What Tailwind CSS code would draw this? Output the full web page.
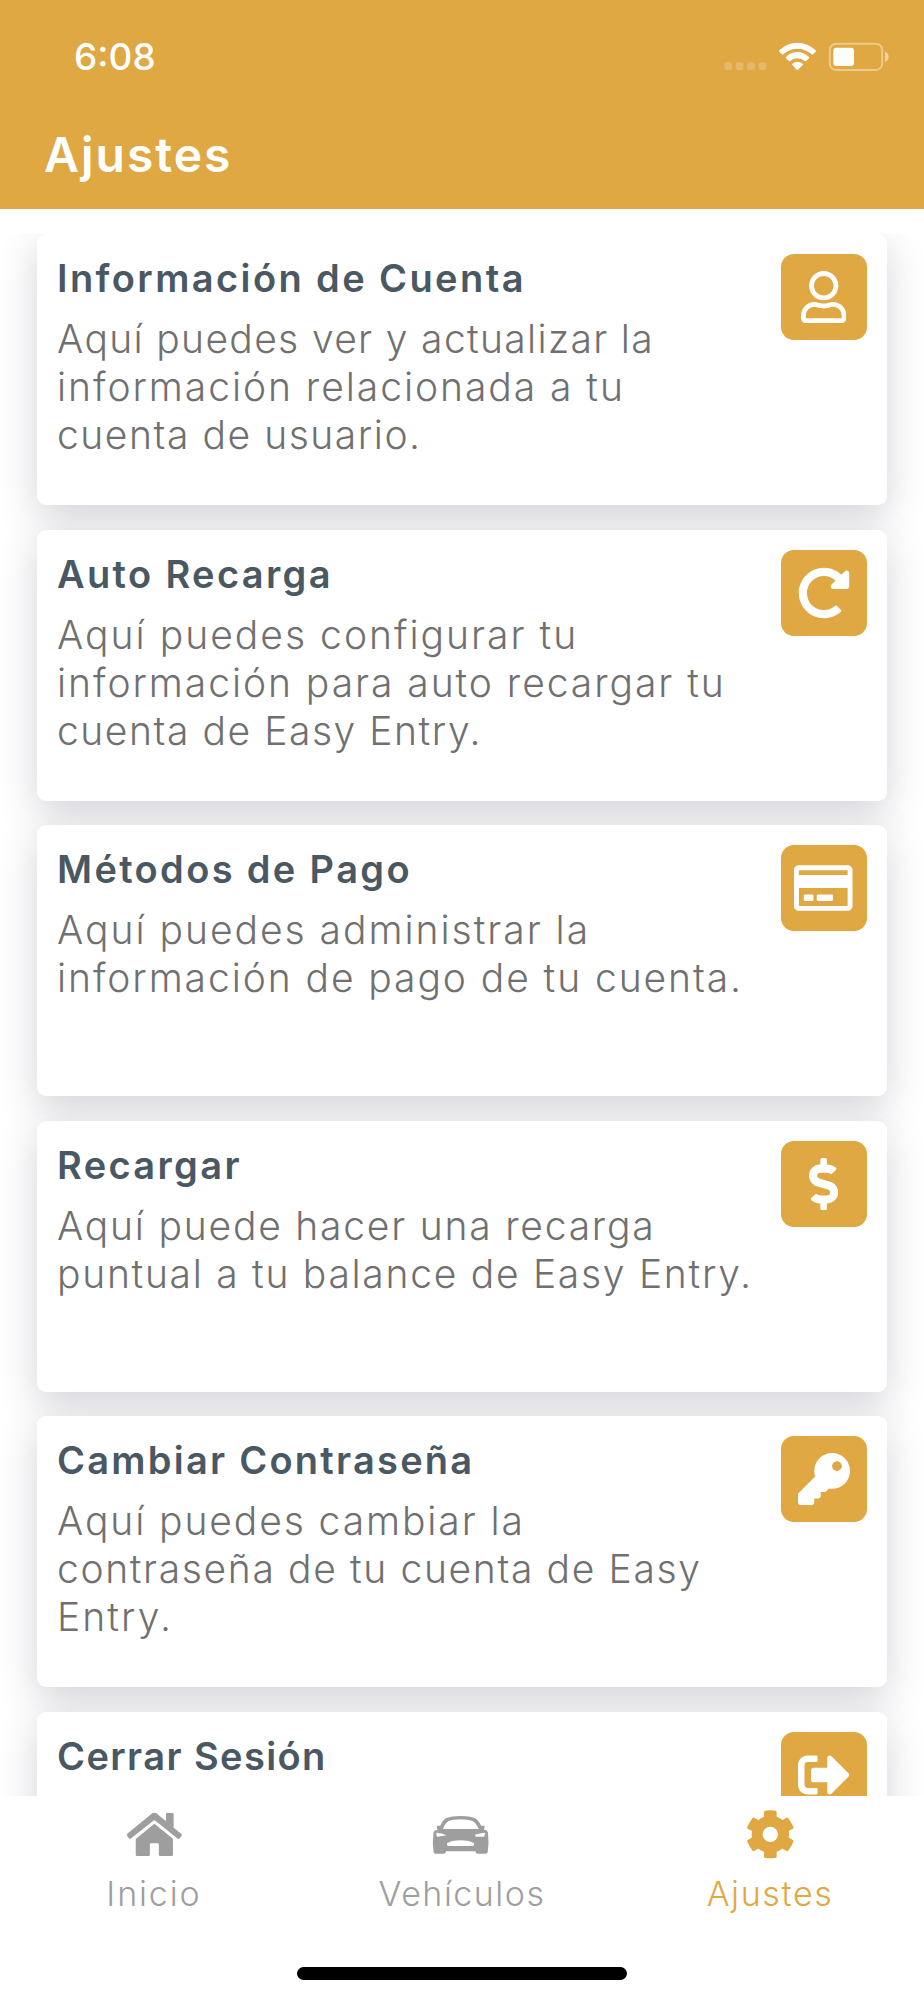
<!DOCTYPE html>
<html lang="es">
<head>
    <meta charset="UTF-8">
    <meta name="viewport" content="width=device-width, initial-scale=1.0">
    <title>Ajustes</title>
    <script src="https://cdn.jsdelivr.net/npm/@tailwindcss/browser@4"></script>
</head>
<body class="bg-white font-['Inter',sans-serif]">
    <div class="flex flex-col w-[924px] h-[2000px] overflow-hidden">

        <header class="bg-[#dfa842] h-[209px] shrink-0 text-white">
            <!-- Status bar -->
            <div class="flex items-start justify-between pt-[34px] pl-[74px] pr-[34px] h-[125px]">
                <span class="text-[37px] leading-[46px] font-medium">6:08</span>
                <svg class="w-[170px] h-[32px] mt-[6px]" viewBox="180 120 510 96" fill="#fff">
                    <g opacity=".2">
                        <rect x="193" y="187" width="23" height="23" rx="6"/>
                        <rect x="227" y="187" width="23" height="23" rx="6"/>
                        <rect x="262" y="187" width="23" height="23" rx="6"/>
                        <rect x="296" y="187" width="23" height="23" rx="6"/>
                    </g>
                    <path d="M358 151Q381 128 412 128T467 151Q469 153 467 155L459 163Q457 165 455 163Q437 146 412 146T370 163Q368 165 366 163L358 155Q356 153 358 151z"/>
                    <path d="M378 171Q393 156 412 156T447 171Q449 173 447 175L438 183Q436 185 434 183Q425 175 412 175T391 183Q389 185 387 183L378 175Q376 173 378 171z"/>
                    <path d="M397 191Q403 185 412 185T428 191Q430 193 428 195L414 209Q412 211 410 209L397 195Q395 193 397 191z"/>
                    <rect x="509.500" y="131" width="157" height="79" rx="19" fill="none" stroke="#fff" stroke-width="6" opacity=".4"/>
                    <rect x="520" y="143" width="62" height="55" rx="9"/>
                    <path d="M675 155Q686 159 686 170T675 186z" opacity=".5"/>
                </svg>
            </div>
            <h1 class="pl-[44px] text-[48px] leading-[60px] font-semibold tracking-[2px]">Ajustes</h1>
        </header>

        <main class="flex-1 min-h-0 pt-[25px]">
            <div class="flex flex-col gap-[24.5px] h-full overflow-hidden px-[37px]">

                <section class="flex justify-between items-start shrink-0 h-[271px] p-[20px] rounded-[9px] bg-white shadow-[0_12px_38px_rgba(50,45,75,0.21)]">
                    <div class="whitespace-nowrap">
                        <h2 class="text-[38px] leading-[48px] font-semibold tracking-[2.4px] text-[#4a5863]">Información de Cuenta</h2>
                        <p class="mt-[13px] text-[39px] leading-[48px] font-light text-[#707070]">
                            <span class="block tracking-[1.34px]">Aquí puedes ver y actualizar la</span>
                            <span class="block tracking-[1.95px]">información relacionada a tu</span>
                            <span class="block tracking-[1.55px]">cuenta de usuario.</span>
                        </p>
                    </div>
                    <div class="flex items-center justify-center size-[86px] pr-px rounded-[13px] bg-[#dfa842]">
                        <svg class="h-[52px]" viewBox="0 0 448 512" fill="#fff"><path d="M313.6 304c-28.7 0-42.5 16-89.6 16-47.1 0-60.8-16-89.6-16C60.2 304 0 364.2 0 438.4V464c0 26.5 21.5 48 48 48h352c26.5 0 48-21.5 48-48v-25.6c0-74.2-60.2-134.4-134.4-134.4zM400 464H48v-25.6c0-47.6 38.8-86.4 86.4-86.4 14.6 0 38.3 16 89.6 16 51.7 0 74.9-16 89.6-16 47.6 0 86.4 38.8 86.4 86.4V464zM224 288c79.5 0 144-64.5 144-144S303.5 0 224 0 80 64.5 80 144s64.5 144 144 144zm0-240c52.9 0 96 43.1 96 96s-43.1 96-96 96-96-43.1-96-96 43.1-96 96-96z"/></svg>
                    </div>
                </section>

                <section class="flex justify-between items-start shrink-0 h-[271px] p-[20px] rounded-[9px] bg-white shadow-[0_12px_38px_rgba(50,45,75,0.21)]">
                    <div class="whitespace-nowrap">
                        <h2 class="text-[38px] leading-[48px] font-semibold tracking-[2.35px] text-[#4a5863]">Auto Recarga</h2>
                        <p class="mt-[13px] text-[39px] leading-[48px] font-light text-[#707070]">
                            <span class="block tracking-[2.02px]">Aquí puedes configurar tu</span>
                            <span class="block tracking-[1.95px]">información para auto recargar tu</span>
                            <span class="block tracking-[1.55px]">cuenta de Easy Entry.</span>
                        </p>
                    </div>
                    <div class="flex items-center justify-center size-[86px] pr-px rounded-[13px] bg-[#dfa842]">
                        <svg class="h-[52px]" viewBox="0 0 512 512" fill="#fff"><path d="M256.455 8c66.269.119 126.437 26.233 170.859 68.685l35.715-35.715C478.149 25.851 504 36.559 504 57.941V192c0 13.255-10.745 24-24 24H345.941c-21.382 0-32.09-25.851-16.971-40.971l41.75-41.75c-30.864-28.899-70.801-44.907-113.23-45.273-92.398-.798-170.283 73.977-169.484 169.442C88.764 348.009 162.184 424 256 424c41.127 0 79.997-14.678 110.629-41.556 4.743-4.161 11.906-3.908 16.368.553l39.662 39.662c4.872 4.872 4.631 12.815-.482 17.433C378.202 479.813 319.926 504 256 504 119.034 504 8.001 392.967 8 256.002 7.999 119.193 119.646 7.755 256.455 8z"/></svg>
                    </div>
                </section>

                <section class="flex justify-between items-start shrink-0 h-[271px] p-[20px] rounded-[9px] bg-white shadow-[0_12px_38px_rgba(50,45,75,0.21)]">
                    <div class="whitespace-nowrap">
                        <h2 class="text-[38px] leading-[48px] font-semibold tracking-[2.35px] text-[#4a5863]">Métodos de Pago</h2>
                        <p class="mt-[13px] text-[39px] leading-[48px] font-light text-[#707070]">
                            <span class="block tracking-[1.98px]">Aquí puedes administrar la</span>
                            <span class="block tracking-[1.92px]">información de pago de tu cuenta.</span>
                        </p>
                    </div>
                    <div class="flex items-center justify-center size-[86px] pr-px rounded-[13px] bg-[#dfa842]">
                        <svg class="h-[52px]" viewBox="0 0 576 512" fill="#fff"><path d="M527.9 32H48.1C21.5 32 0 53.5 0 80v352c0 26.5 21.5 48 48.1 48h479.8c26.6 0 48.1-21.5 48.1-48V80c0-26.5-21.5-48-48.1-48zM54.1 80h467.8c3.3 0 6 2.7 6 6v42H48.1V86c0-3.3 2.7-6 6-6zm467.8 352H54.1c-3.3 0-6-2.7-6-6V256h479.8v170c0 3.3-2.7 6-6 6zM192 332v40c0 6.6-5.4 12-12 12h-72c-6.6 0-12-5.4-12-12v-40c0-6.6 5.4-12 12-12h72c6.6 0 12 5.4 12 12zm192 0v40c0 6.6-5.4 12-12 12H236c-6.6 0-12-5.4-12-12v-40c0-6.6 5.4-12 12-12h136c6.6 0 12 5.4 12 12z"/></svg>
                    </div>
                </section>

                <section class="flex justify-between items-start shrink-0 h-[271px] p-[20px] rounded-[9px] bg-white shadow-[0_12px_38px_rgba(50,45,75,0.21)]">
                    <div class="whitespace-nowrap">
                        <h2 class="text-[38px] leading-[48px] font-semibold tracking-[2.35px] text-[#4a5863]">Recargar</h2>
                        <p class="mt-[13px] text-[39px] leading-[48px] font-light text-[#707070]">
                            <span class="block tracking-[1.78px]">Aquí puede hacer una recarga</span>
                            <span class="block tracking-[1.72px]">puntual a tu balance de Easy Entry.</span>
                        </p>
                    </div>
                    <div class="flex items-center justify-center size-[86px] pr-px rounded-[13px] bg-[#dfa842]">
                        <svg class="h-[52px]" viewBox="0 0 288 512" fill="#fff"><path d="M209.2 233.4l-108-31.6C88.7 198.2 80 186.5 80 173.5c0-16.3 13.2-29.5 29.5-29.5h66.3c12.2 0 24.2 3.7 34.2 10.5 6.1 4.1 14.3 3.1 19.5-2l34.8-34c7.1-6.9 6.1-18.4-1.8-24.5C238 74.8 207.4 64.1 176 64V16c0-8.8-7.2-16-16-16h-32c-8.8 0-16 7.2-16 16v48h-2.5C45.8 64-5.4 118.7.5 183.6c4.2 46.1 39.4 83.6 83.8 96.6l102.5 30c12.5 3.7 21.2 15.3 21.2 28.3 0 16.3-13.2 29.5-29.5 29.5h-66.3C100 368 88 364.3 78 357.5c-6.1-4.1-14.3-3.1-19.5 2l-34.8 34c-7.1 6.9-6.1 18.4 1.8 24.5 24.5 19.2 55.1 29.9 86.5 30v48c0 8.8 7.2 16 16 16h32c8.8 0 16-7.2 16-16v-48.2c46.6-.9 90.3-28.6 105.7-72.7 21.5-61.6-14.6-124.8-72.5-141.7z"/></svg>
                    </div>
                </section>

                <section class="flex justify-between items-start shrink-0 h-[271px] p-[20px] rounded-[9px] bg-white shadow-[0_12px_38px_rgba(50,45,75,0.21)]">
                    <div class="whitespace-nowrap">
                        <h2 class="text-[38px] leading-[48px] font-semibold tracking-[2.25px] text-[#4a5863]">Cambiar Contraseña</h2>
                        <p class="mt-[13px] text-[39px] leading-[48px] font-light text-[#707070]">
                            <span class="block tracking-[1.9px]">Aquí puedes cambiar la</span>
                            <span class="block tracking-[1.64px]">contraseña de tu cuenta de Easy</span>
                            <span class="block tracking-[2.1px]">Entry.</span>
                        </p>
                    </div>
                    <div class="flex items-center justify-center size-[86px] pr-px rounded-[13px] bg-[#dfa842]">
                        <svg class="h-[52px]" viewBox="0 0 512 512" fill="#fff"><path d="M512 176.001C512 273.203 433.202 352 336 352c-11.22 0-22.19-1.062-32.827-3.069l-24.012 27.014A23.999 23.999 0 0 1 261.223 384H224v40c0 13.255-10.745 24-24 24h-40v40c0 13.255-10.745 24-24 24H24c-13.255 0-24-10.745-24-24v-78.059c0-6.365 2.529-12.47 7.029-16.971l161.802-161.802C163.108 213.814 160 195.271 160 176 160 78.798 238.797.001 335.999 0 433.488-.001 512 78.511 512 176.001zM336 128c0 26.51 21.49 48 48 48s48-21.49 48-48-21.49-48-48-48-48 21.49-48 48z"/></svg>
                    </div>
                </section>

                <section class="flex justify-between items-start shrink-0 h-[271px] p-[20px] rounded-[9px] bg-white shadow-[0_12px_38px_rgba(50,45,75,0.21)]">
                    <h2 class="text-[38px] leading-[48px] font-semibold tracking-[1.4px] text-[#4a5863]">Cerrar Sesión</h2>
                    <div class="flex items-center justify-center size-[86px] pr-px rounded-[13px] bg-[#dfa842]">
                        <svg class="h-[52px]" viewBox="0 0 512 512" fill="#fff"><path d="M497 273L329 441c-15 15-41 4.5-41-17v-96H152c-13.3 0-24-10.7-24-24v-96c0-13.3 10.7-24 24-24h136V88c0-21.4 25.9-32 41-17l168 168c9.3 9.4 9.3 24.6 0 34zM192 436v-40c0-6.6-5.4-12-12-12H96c-17.7 0-32-14.3-32-32V160c0-17.7 14.3-32 32-32h84c6.6 0 12-5.4 12-12V76c0-6.6-5.4-12-12-12H96c-53 0-96 43-96 96v192c0 53 43 96 96 96h84c6.6 0 12-5.4 12-12z"/></svg>
                    </div>
                </section>

            </div>
        </main>

        <!-- Tab bar -->
        <nav class="flex flex-col justify-between h-[204px] shrink-0 pt-[12px] pb-[20px] bg-white">
            <div class="grid grid-cols-3 text-[34px] leading-[44px] font-light text-[#9e9e9e]">
                <a class="flex flex-col items-center gap-[8px]">
                    <svg class="size-[56px]" viewBox="191.7 384 162.6 168" preserveAspectRatio="none" fill="currentColor">
                        <path d="M268 400Q274 396 280 400L308 424V402Q308 399 311 399H327Q330 399 330 402V443L352 461Q355 464 353 467L348 475Q345 478 342 476L277 422Q274 419 271 422L207 475Q203 478 200 475L195 467Q193 463 197 460z"/>
                        <path d="M274 431L328 476V524Q328 528 324 528H291Q287 528 287 524V493Q287 490 284 490H264Q261 490 261 493V524Q261 528 257 528H224Q220 528 220 524V477z"/>
                    </svg>
                    <span class="tracking-[1.9px]">Inicio</span>
                </a>
                <a class="flex flex-col items-center gap-[8px]">
                    <svg class="size-[56px] overflow-visible" viewBox="1086 384 162.6 168" preserveAspectRatio="none" fill="currentColor" fill-rule="evenodd">
                        <path d="M1163 408Q1190 408 1204 414Q1213 418 1223 437H1231Q1234 437 1233 441L1231 449Q1243 449 1243 462Q1246 486 1242 516Q1241 521 1237 521H1212Q1207 521 1206 514H1121Q1120 521 1115 521H1090Q1086 521 1085 516Q1081 486 1084 462Q1084 450 1096 450L1094 441Q1093 437 1097 437H1104Q1113 418 1122 414Q1137 408 1163 408zM1163 418Q1141 418 1129 423Q1119 427 1112 447H1216Q1208 427 1197 423Q1185 418 1163 418zM1093 458Q1092 470 1097 470L1122 466Q1109 459 1093 458zM1234 458Q1218 459 1205 464L1207 470H1229Q1234 470 1234 458zM1124 490V494Q1124 498 1129 498H1198Q1202 498 1202 494V490Q1190 481 1163 481T1124 490z"/>
                    </svg>
                    <span class="tracking-[1.5px]">Vehículos</span>
                </a>
                <a class="flex flex-col items-center gap-[8px] text-[#dfa842]">
                    <svg class="size-[56px]" viewBox="126 384 168 168" fill="currentColor">
                        <circle cx="211" cy="463" r="39.5" fill="none" stroke="currentColor" stroke-width="33"/>
                        <path id="tooth" d="M192 396Q192 393 195 392Q211 390 227 392Q230 393 230 396V412L238 420H184L192 412z"/>
                        <use href="#tooth" transform="rotate(60 211 463)"/>
                        <use href="#tooth" transform="rotate(120 211 463)"/>
                        <use href="#tooth" transform="rotate(180 211 463)"/>
                        <use href="#tooth" transform="rotate(240 211 463)"/>
                        <use href="#tooth" transform="rotate(300 211 463)"/>
                    </svg>
                    <span class="tracking-[1.6px]">Ajustes</span>
                </a>
            </div>
            <div class="self-center w-[330px] h-[13px] rounded-full bg-black"></div>
        </nav>

    </div>
</body>
</html>
